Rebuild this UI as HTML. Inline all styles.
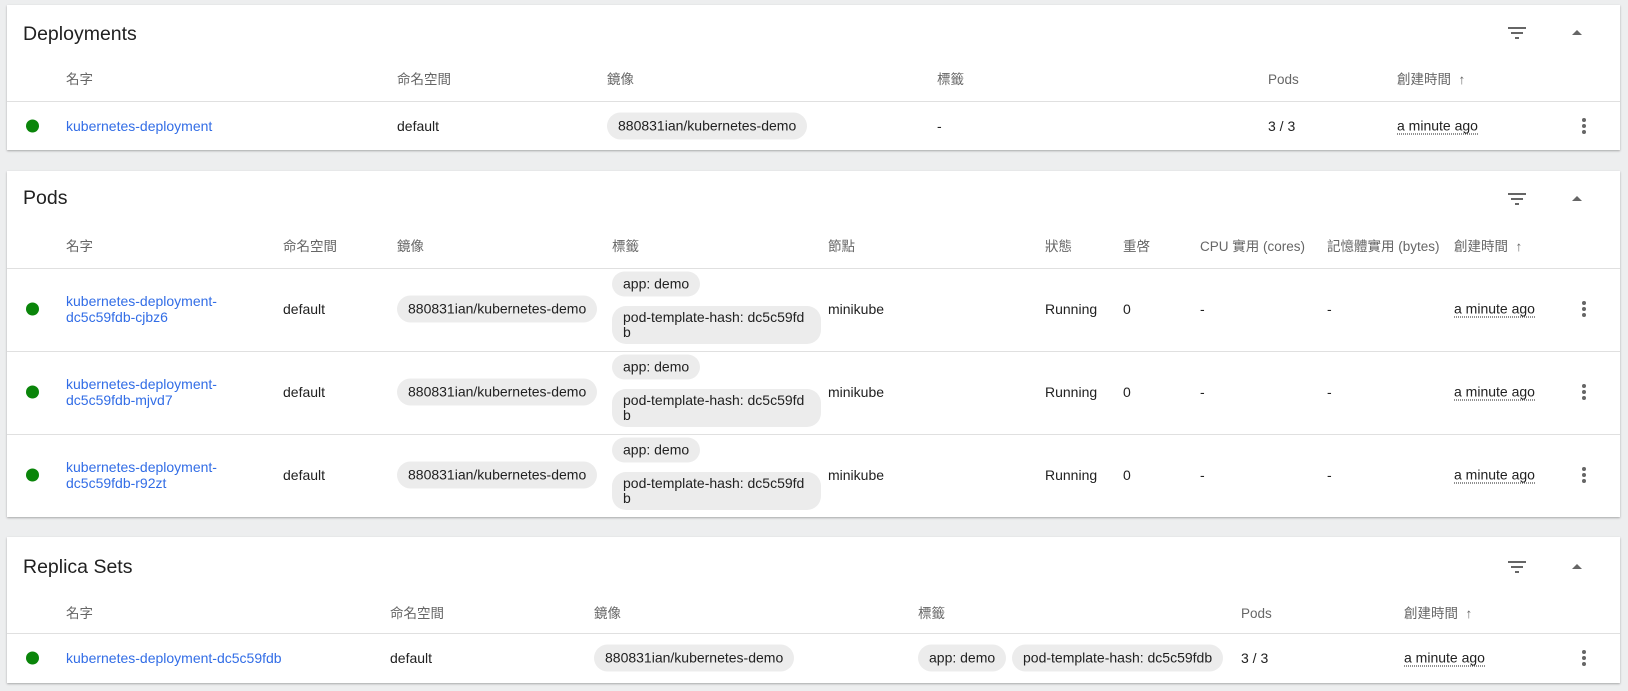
<!DOCTYPE html>
<html><head><meta charset="utf-8"><style>
*{margin:0;padding:0;box-sizing:border-box}
body{width:1628px;height:691px;background:#edeeef;font-family:"Liberation Sans","Noto Sans CJK TC",sans-serif;font-size:14px;color:#212121;position:relative;overflow:hidden}
.card{position:absolute;left:7px;width:1613px;background:#fff;box-shadow:0 1px 2px rgba(0,0,0,.3)}
.t{position:absolute;white-space:nowrap;transform:translateY(-50%);line-height:16px}
.title{font-size:19.5px;color:#212121}
.h{color:#666;font-size:13.5px}
.a{color:#326de6}
.chip{position:absolute;background:#ececec;border-radius:14px;padding:0 11px;height:27px;line-height:27px;white-space:nowrap;transform:translateY(-50%)}
.chip2{position:absolute;background:#ececec;border-radius:14px;padding:4px 14px 4px 11px;width:209px;line-height:15px;height:38px;white-space:normal;word-break:break-all}
.div{position:absolute;left:0;right:0;height:1px;background:#e0e0e0}
.dot{position:absolute;width:13px;height:13px;border-radius:50%;background:#0a850a;transform:translateY(-50%)}
.ago{border-bottom:1px dotted #212121}
.more{position:absolute;width:4px;transform:translateY(-50%)}
.more i{display:block;width:4px;height:4px;border-radius:50%;background:#666;margin:0 0 2px}
.fil{position:absolute}
</style></head><body>

<!-- Deployments -->
<div class="card" style="top:5px;height:145px">
<div class="t title" style="left:16px;top:29px">Deployments</div>
<svg class="fil" style="left:1501px;top:20px" width="18" height="14"><rect x="0" y="2" width="18" height="2" fill="#666"/><rect x="3" y="7" width="12" height="2" fill="#666"/><rect x="7" y="12" width="4" height="2" fill="#666"/></svg>
<svg class="fil" style="left:1565px;top:25px" width="10" height="5"><path d="M0 5L5 0L10 5Z" fill="#666"/></svg>
<div class="t h" style="left:59px;top:75px">名字</div>
<div class="t h" style="left:390px;top:75px">命名空間</div>
<div class="t h" style="left:600px;top:75px">鏡像</div>
<div class="t h" style="left:930px;top:75px">標籤</div>
<div class="t h" style="left:1261px;top:75px">Pods</div>
<div class="t h" style="left:1390px;top:75px">創建時間 &nbsp;↑</div>
<div class="div" style="top:96px"></div>
<div class="dot" style="left:19px;top:121px"></div>
<div class="t a" style="left:59px;top:121px">kubernetes-deployment</div>
<div class="t" style="left:390px;top:121px">default</div>
<div class="chip" style="left:600px;top:121px">880831ian/kubernetes-demo</div>
<div class="t" style="left:930px;top:121px">-</div>
<div class="t" style="left:1261px;top:121px">3 / 3</div>
<div class="t ago" style="left:1390px;top:121px">a minute ago</div>
<div class="more" style="left:1575px;top:122px"><i></i><i></i><i></i></div>
</div>

<!-- Pods -->
<div class="card" style="top:171px;height:346px">
<div class="t title" style="left:16px;top:27px">Pods</div>
<svg class="fil" style="left:1501px;top:20px" width="18" height="14"><rect x="0" y="2" width="18" height="2" fill="#666"/><rect x="3" y="7" width="12" height="2" fill="#666"/><rect x="7" y="12" width="4" height="2" fill="#666"/></svg>
<svg class="fil" style="left:1565px;top:25px" width="10" height="5"><path d="M0 5L5 0L10 5Z" fill="#666"/></svg>
<div class="t h" style="left:59px;top:76px">名字</div>
<div class="t h" style="left:276px;top:76px">命名空間</div>
<div class="t h" style="left:390px;top:76px">鏡像</div>
<div class="t h" style="left:605px;top:76px">標籤</div>
<div class="t h" style="left:821px;top:76px">節點</div>
<div class="t h" style="left:1038px;top:76px">狀態</div>
<div class="t h" style="left:1116px;top:76px">重啓</div>
<div class="t h" style="left:1193px;top:76px">CPU 實用 (cores)</div>
<div class="t h" style="left:1320px;top:76px">記憶體實用 (bytes)</div>
<div class="t h" style="left:1447px;top:76px">創建時間 &nbsp;↑</div>
<div class="div" style="top:97px"></div>

<!-- row 1 -->
<div class="dot" style="left:19px;top:138px"></div>
<div class="t a" style="left:59px;top:138px">kubernetes-deployment-<br>dc5c59fdb-cjbz6</div>
<div class="t" style="left:276px;top:138px">default</div>
<div class="chip" style="left:390px;top:138px">880831ian/kubernetes-demo</div>
<div class="chip" style="left:605px;top:113px;height:25px;line-height:25px">app: demo</div>
<div class="chip2" style="left:605px;top:135px">pod-template-hash: dc5c59fdb</div>
<div class="t" style="left:821px;top:138px">minikube</div>
<div class="t" style="left:1038px;top:138px">Running</div>
<div class="t" style="left:1116px;top:138px">0</div>
<div class="t" style="left:1193px;top:138px">-</div>
<div class="t" style="left:1320px;top:138px">-</div>
<div class="t ago" style="left:1447px;top:138px">a minute ago</div>
<div class="more" style="left:1575px;top:139px"><i></i><i></i><i></i></div>
<div class="div" style="top:180px"></div>

<!-- row 2 -->
<div class="dot" style="left:19px;top:221px"></div>
<div class="t a" style="left:59px;top:221px">kubernetes-deployment-<br>dc5c59fdb-mjvd7</div>
<div class="t" style="left:276px;top:221px">default</div>
<div class="chip" style="left:390px;top:221px">880831ian/kubernetes-demo</div>
<div class="chip" style="left:605px;top:196px;height:25px;line-height:25px">app: demo</div>
<div class="chip2" style="left:605px;top:218px">pod-template-hash: dc5c59fdb</div>
<div class="t" style="left:821px;top:221px">minikube</div>
<div class="t" style="left:1038px;top:221px">Running</div>
<div class="t" style="left:1116px;top:221px">0</div>
<div class="t" style="left:1193px;top:221px">-</div>
<div class="t" style="left:1320px;top:221px">-</div>
<div class="t ago" style="left:1447px;top:221px">a minute ago</div>
<div class="more" style="left:1575px;top:222px"><i></i><i></i><i></i></div>
<div class="div" style="top:263px"></div>

<!-- row 3 -->
<div class="dot" style="left:19px;top:304px"></div>
<div class="t a" style="left:59px;top:304px">kubernetes-deployment-<br>dc5c59fdb-r92zt</div>
<div class="t" style="left:276px;top:304px">default</div>
<div class="chip" style="left:390px;top:304px">880831ian/kubernetes-demo</div>
<div class="chip" style="left:605px;top:279px;height:25px;line-height:25px">app: demo</div>
<div class="chip2" style="left:605px;top:301px">pod-template-hash: dc5c59fdb</div>
<div class="t" style="left:821px;top:304px">minikube</div>
<div class="t" style="left:1038px;top:304px">Running</div>
<div class="t" style="left:1116px;top:304px">0</div>
<div class="t" style="left:1193px;top:304px">-</div>
<div class="t" style="left:1320px;top:304px">-</div>
<div class="t ago" style="left:1447px;top:304px">a minute ago</div>
<div class="more" style="left:1575px;top:305px"><i></i><i></i><i></i></div>
</div>

<!-- Replica Sets -->
<div class="card" style="top:537px;height:146px">
<div class="t title" style="left:16px;top:30px">Replica Sets</div>
<svg class="fil" style="left:1501px;top:22px" width="18" height="14"><rect x="0" y="2" width="18" height="2" fill="#666"/><rect x="3" y="7" width="12" height="2" fill="#666"/><rect x="7" y="12" width="4" height="2" fill="#666"/></svg>
<svg class="fil" style="left:1565px;top:27px" width="10" height="5"><path d="M0 5L5 0L10 5Z" fill="#666"/></svg>
<div class="t h" style="left:59px;top:77px">名字</div>
<div class="t h" style="left:383px;top:77px">命名空間</div>
<div class="t h" style="left:587px;top:77px">鏡像</div>
<div class="t h" style="left:911px;top:77px">標籤</div>
<div class="t h" style="left:1234px;top:77px">Pods</div>
<div class="t h" style="left:1397px;top:77px">創建時間 &nbsp;↑</div>
<div class="div" style="top:96px"></div>
<div class="dot" style="left:19px;top:121px"></div>
<div class="t a" style="left:59px;top:121px">kubernetes-deployment-dc5c59fdb</div>
<div class="t" style="left:383px;top:121px">default</div>
<div class="chip" style="left:587px;top:121px">880831ian/kubernetes-demo</div>
<div class="chip" style="left:911px;top:121px">app: demo</div>
<div class="chip" style="left:1005px;top:121px">pod-template-hash: dc5c59fdb</div>
<div class="t" style="left:1234px;top:121px">3 / 3</div>
<div class="t ago" style="left:1397px;top:121px">a minute ago</div>
<div class="more" style="left:1575px;top:122px"><i></i><i></i><i></i></div>
</div>
</body></html>
